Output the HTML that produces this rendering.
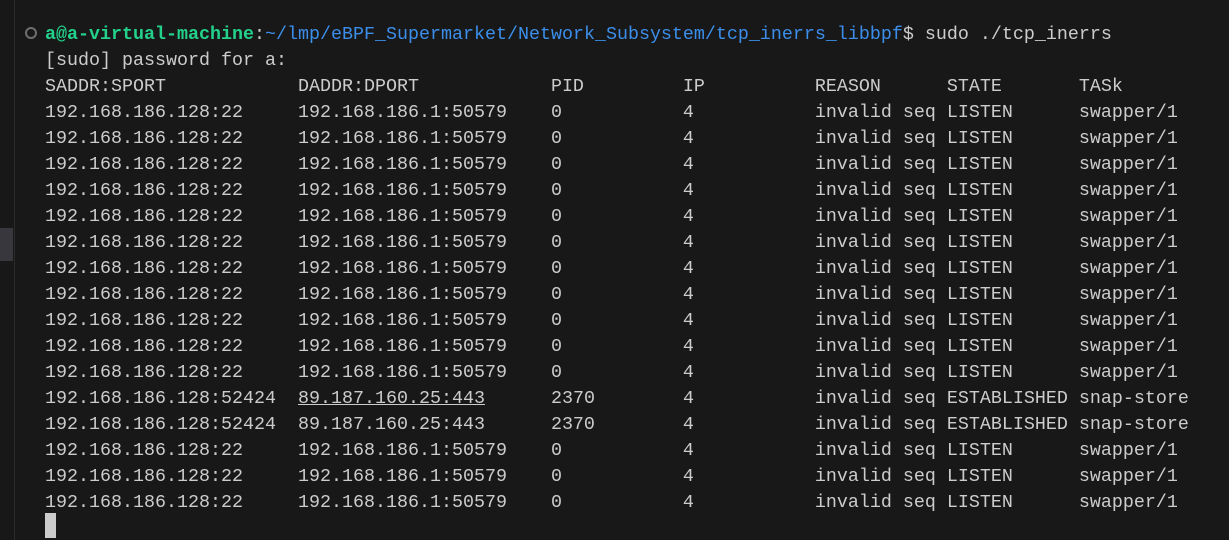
<!DOCTYPE html>
<html><head><meta charset="utf-8"><style>
html,body{margin:0;padding:0;width:1229px;height:540px;background:#181818;overflow:hidden}
.g{position:absolute;left:14px;top:0;width:1px;height:540px;background:#2b2b2b}
.s{position:absolute;left:0;top:228px;width:13px;height:33px;background:#37373d}
.c{position:absolute;left:25px;top:27px;width:8px;height:8px;border:2px solid #6e6e6e;border-radius:50%}
pre{position:absolute;left:45px;top:22px;margin:0;font-family:"Liberation Mono",monospace;font-size:18.33px;line-height:26px;color:#cccccc}
.gr{color:#23d18b;font-weight:bold}.bl{color:#3b8eea}
.u{text-decoration:underline}
.cur{position:absolute;left:45px;top:513px;width:11px;height:25px;background:#cccccc}
</style></head><body>
<div class="g"></div><div class="s"></div><div class="c"></div>
<pre><span class="gr">a@a-virtual-machine</span>:<span class="bl">~/lmp/eBPF_Supermarket/Network_Subsystem/tcp_inerrs_libbpf</span>$ sudo ./tcp_inerrs
[sudo] password for a:
SADDR:SPORT            DADDR:DPORT            PID         IP          REASON      STATE       TASk
192.168.186.128:22     192.168.186.1:50579    0           4           invalid seq LISTEN      swapper/1
192.168.186.128:22     192.168.186.1:50579    0           4           invalid seq LISTEN      swapper/1
192.168.186.128:22     192.168.186.1:50579    0           4           invalid seq LISTEN      swapper/1
192.168.186.128:22     192.168.186.1:50579    0           4           invalid seq LISTEN      swapper/1
192.168.186.128:22     192.168.186.1:50579    0           4           invalid seq LISTEN      swapper/1
192.168.186.128:22     192.168.186.1:50579    0           4           invalid seq LISTEN      swapper/1
192.168.186.128:22     192.168.186.1:50579    0           4           invalid seq LISTEN      swapper/1
192.168.186.128:22     192.168.186.1:50579    0           4           invalid seq LISTEN      swapper/1
192.168.186.128:22     192.168.186.1:50579    0           4           invalid seq LISTEN      swapper/1
192.168.186.128:22     192.168.186.1:50579    0           4           invalid seq LISTEN      swapper/1
192.168.186.128:22     192.168.186.1:50579    0           4           invalid seq LISTEN      swapper/1
192.168.186.128:52424  <span class="u">89.187.160.25:443</span>      2370        4           invalid seq ESTABLISHED snap-store
192.168.186.128:52424  89.187.160.25:443      2370        4           invalid seq ESTABLISHED snap-store
192.168.186.128:22     192.168.186.1:50579    0           4           invalid seq LISTEN      swapper/1
192.168.186.128:22     192.168.186.1:50579    0           4           invalid seq LISTEN      swapper/1
192.168.186.128:22     192.168.186.1:50579    0           4           invalid seq LISTEN      swapper/1</pre>
<div class="cur"></div>
</body></html>
